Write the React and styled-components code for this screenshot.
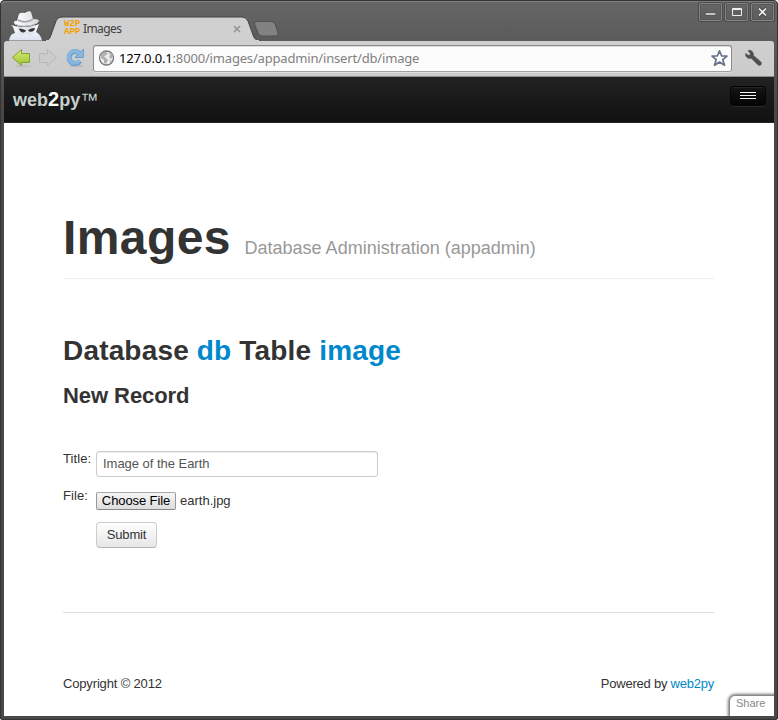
import React from "react";
import styled, { createGlobalStyle } from "styled-components";

const GlobalStyle = createGlobalStyle`
  * { box-sizing: border-box; }
  body { margin: 0; background: #fff; font: 13px/18px "Liberation Sans", Arial, sans-serif; color: #333; }
`;

const Window = styled.div`
  width: 778px;
  height: 720px;
  display: flex;
  flex-direction: column;
  overflow: hidden;
  padding: 0 4px 4px;
  border-radius: 5px 5px 3px 3px;
  background: linear-gradient(#666 0, #5b5b5b 40px, #484848 110px, #484848 100%);
  box-shadow: inset 0 0 0 1px #343434, inset 1px 3px 0 -1px #7e7e7e;
  position: relative;
`;
const TitleBar = styled.header`
  height: 41px;
  flex: none;
  display: flex;
  align-items: flex-start;
`;
const Incognito = styled.svg`
  width: 35px;
  height: 32px;
  margin: 9px 0 0 4px;
`;
const Tab = styled.div`
  width: 215px;
  height: 26px;
  margin: 15px 0 0 2px;
  padding: 5px 19px 0 18px;
  display: flex;
  align-items: flex-start;
  position: relative;
`;
const TabShape = styled.svg`
  position: absolute;
  inset: 0;
  z-index: 0;
`;
const Favicon = styled.span`
  position: relative;
  width: 17px;
  height: 16px;
  padding: 1px 0 0 1px;
  display: flex;
  flex-direction: column;
  font: bold 9px/8px "Liberation Mono", monospace;
  color: #f3a000;
  letter-spacing: 0;
  span { height: 7px; line-height: 7px; }
  span + span { margin-top: 1px; }
`;
const TabTitle = styled.span`
  position: relative;
  flex: 1;
  margin-left: 3px;
  font: 12px/17px "Noto Sans", sans-serif;
  letter-spacing: -0.6px;
  color: #404040;
`;
const TabClose = styled.svg`
  position: relative;
  width: 8px;
  height: 8px;
  margin-top: 5px;
`;
const NewTab = styled.svg`
  width: 28px;
  height: 18px;
  margin: 20px 0 0 -8px;
`;
const WindowControls = styled.div`
  display: flex;
  gap: 3px;
  margin: 3px 0 0 auto;
`;
const Control = styled.button`
  width: 23px;
  height: 18px;
  padding: 0;
  border: 1px solid #858585;
  border-radius: 2px;
  background: linear-gradient(#666, #5c5c5c);
  box-shadow: 0 0 0 1px #4b4b4b, inset 0 0 0 1px #575757;
  display: block;
  svg { display: block; }
`;
const Toolbar = styled.div`
  height: 36px;
  flex: none;
  display: flex;
  align-items: center;
  padding: 0 12px 1px 7px;
  background: linear-gradient(#d0d0d0, #cbcbcb);
  border-bottom: 1px solid #8c8c8c;
  border-radius: 3px 3px 0 0;
`;
const ToolIcon = styled.svg`
  width: 22px;
  height: 22px;
  flex: none;
  margin-right: ${(p) => p.$gap || 5}px;
`;
const Wrench = styled.svg`
  width: 17px;
  height: 18px;
  margin-left: auto;
`;
const AddressBar = styled.div`
  width: 639px;
  flex: none;
  height: 27px;
  display: flex;
  align-items: center;
  padding: 0 2px 0 4px;
  border: 1px solid #8a8a8a;
  border-bottom-color: #a0a0a0;
  border-radius: 3px;
  background: #fcfcfc;
  box-shadow: inset 0 1px #ddd, 0 1px #dedede;
`;
const Url = styled.span`
  flex: 1;
  margin-left: 3px;
  font: 13px/18px "Noto Sans", sans-serif;
  letter-spacing: -0.17px;
  color: #808080;
  b { font-weight: 400; color: #000; }
`;
const Page = styled.main`
  flex: 1;
  background: #fff;
  position: relative;
`;
const Navbar = styled.nav`
  height: 46px;
  display: flex;
  align-items: flex-start;
  justify-content: space-between;
  padding: 9px 8px 0 9px;
  background: linear-gradient(#222, #111);
  border-bottom: 1px solid #252525;
`;
const Brand = styled.a`
  font-size: 18px;
  line-height: 27px;
  font-weight: bold;
  color: #c6d0cc;
  b { color: #fff; font-size: 20px; }
  span { font-weight: 400; }
`;
const MenuButton = styled.button`
  width: 36px;
  height: 20px;
  padding: 5px 10px 0 9px;
  border: 1px solid #050505;
  border-top-color: #000;
  border-radius: 4px;
  background: linear-gradient(#151515, #040404);
  box-shadow: 0 1px #2b2b2b, inset 0 1px #242424;
  display: flex;
  flex-direction: column;
  gap: 2px;
`;
const MenuBar = styled.i`
  width: 16px;
  height: 1px;
  background: #f5f5f5;
`;
const Content = styled.div`
  width: 651px;
  margin-left: 59px;
`;
const PageHeader = styled.header`
  height: 156px;
  padding-top: 91px;
  border-bottom: 1px solid #eee;
`;
const Title = styled.h1`
  margin: 0;
  font-size: 48px;
  line-height: 48px;
  letter-spacing: 0.4px;
  white-space: nowrap;
  small { font-size: 18px; font-weight: 400; color: #999; letter-spacing: 0; }
`;
const Heading = styled.h2`
  margin: 54px 0 0;
  font-size: 28px;
  line-height: 36px;
  letter-spacing: 0.17px;
`;
const SubHeading = styled.h3`
  margin: 9px 0 0;
  font-size: 22px;
  line-height: 36px;
  letter-spacing: -0.07px;
`;
const Link = styled.a`
  color: #08c;
`;
const Form = styled.form`
  display: grid;
  grid-template-columns: 33px 1fr;
  grid-template-rows: 40px 31px 26px;
  margin-top: 37px;
`;
const Label = styled.label`
  margin-top: ${(p) => p.$top}px;
  letter-spacing: 0.1px;
`;
const TextInput = styled.input`
  width: 282px;
  height: 26px;
  padding: 3px 6px 4px;
  border: 1px solid #ccc;
  border-radius: 3px;
  box-shadow: inset 0 1px 1px rgba(0,0,0,.075);
  font: 13px/18px "Liberation Sans", Arial, sans-serif;
  letter-spacing: -0.03px;
  color: #555;
`;
const FileField = styled.div`
  display: flex;
  gap: 4px;
  height: 18px;
  margin-top: 1px;
`;
const FileButton = styled.button`
  width: 80px;
  height: 18px;
  padding: 0;
  border: 1px solid #999;
  border-color: #aaa #999 #888 #999;
  border-radius: 2px;
  background: linear-gradient(#f6f6f6, #dedede);
  font: 13px/16px "Liberation Sans", Arial, sans-serif;
  letter-spacing: -0.1px;
  color: #000;
`;
const Submit = styled.button`
  grid-column: 2;
  width: 61px;
  height: 26px;
  padding: 0;
  border: 1px solid #ccc;
  border-bottom-color: #b3b3b3;
  border-radius: 4px;
  background: linear-gradient(#fff, #e6e6e6);
  font: 13px/18px "Liberation Sans", Arial, sans-serif;
  letter-spacing: -0.2px;
  color: #333;
`;
const Footer = styled.footer`
  display: flex;
  justify-content: space-between;
  margin-top: 64px;
  padding-top: 62px;
  border-top: 1px solid #ddd;
  letter-spacing: -0.16px;
  span + span { letter-spacing: -0.23px; }
`;
const Share = styled.div`
  position: absolute;
  right: 0;
  bottom: 0;
  width: 44px;
  height: 20px;
  padding-left: 6px;
  border-radius: 5px 0 0 0;
  background: #fff;
  box-shadow: 0 0 3px 2px #777;
  clip-path: inset(-5px 0 0 -5px);
  font-size: 11px;
  line-height: 15px;
  color: #888;
`;

export default function App() {
  return (
    <Window>
      <GlobalStyle />
      <TitleBar>
        <Incognito viewBox="0 0 35 32">
          <defs>
            <linearGradient id="coat" x2="0" y2="1"><stop stopColor="#fff" /><stop offset="1" stopColor="#dce2f0" /></linearGradient>
            <linearGradient id="hat" x2="1" y2="0"><stop stopColor="#fff" /><stop offset="1" stopColor="#d9dade" /></linearGradient>
          </defs>
          <path d="M1 31.500C2 26 4 25 7 24L5 18 3 16 10 18H24L31 15 28 23C31 25 33 27 34 31.500z" fill="url(#coat)" />
          <path d="M9 17Q17 20 27 16L26 23l-4 4-4-2-5 2-3-4z" fill="#e2e5ed" />
          <path d="M9 12 11 5Q13 3 17 4 21 1 23 3L25 10Q31 10 31 12C29 17 8 19 6 14Q6 11 9 12z" fill="url(#hat)" />
          <path d="M10 10Q17 14 25 9.500L25.500 11Q17 16 10 12z" fill="#a5a7ad" />
          <path d="M7 15Q17 20 29 14" fill="none" stroke="#c8cad0" />
          <path d="M11 19.500q4 0 6 1.500h3q3-2 7-2c0 4-6 5-7 2h-2c-1 4-6 3-7-1.500z" fill="#333" />
        </Incognito>
        <Tab>
          <TabShape width="215" height="26" viewBox="0 0 215 26">
            <path d="M0 26C4 25 5 23 6 20L11 6Q12 2 17 2H197Q201 2 203 6L208 20Q210 26 215 26z" fill="#d0d0d0" stroke="#454545" strokeWidth="1" />
            <path d="M1 25.500H214" stroke="#d0d0d0" />
          </TabShape>
          <Favicon><span>W2P</span><span>APP</span></Favicon>
          <TabTitle>Images</TabTitle>
          <TabClose viewBox="0 0 8 8"><path d="M1 1l6 6M7 1L1 7" stroke="#929292" strokeWidth="1.500" /></TabClose>
        </Tab>
        <NewTab viewBox="0 0 28 18"><path d="M4 1.500H19Q22 1.500 23 4L26 13Q27 16 24 16H10Q7 16 6 13L2.500 4Q2 1.500 4 1.500z" fill="#828282" stroke="#505050" /></NewTab>
        <WindowControls>
          <Control aria-label="Minimize"><svg width="21" height="16"><rect x="5.500" y="9" width="10" height="2" fill="#f0f0f0" stroke="#444" strokeWidth=".5" /></svg></Control>
          <Control aria-label="Maximize"><svg width="21" height="16"><path d="M6.500 4.500h9v7h-9zM6 5.500h10" fill="none" stroke="#eee" /></svg></Control>
          <Control aria-label="Close"><svg width="21" height="16"><path d="M7 4l7 8M14 4l-7 8" stroke="#424242" strokeWidth="3" /><path d="M7 4.500l7 7M14 4.500l-7 7" stroke="#f2f2f2" strokeWidth="1.700" /></svg></Control>
        </WindowControls>
      </TitleBar>
      <Toolbar>
        <ToolIcon viewBox="0 0 22 22">
          <defs><linearGradient id="back" x2="0" y2="1"><stop stopColor="#d9ed83" /><stop offset="1" stopColor="#9bc329" /></linearGradient></defs>
          <ellipse cx="12" cy="19" rx="8" ry="1.500" fill="#aaa" opacity=".35" />
          <path d="M1.500 10.500 10.500 2.500V6.500H18.500V15.500H10.500V18.500z" fill="url(#back)" stroke="#80a32d" strokeLinejoin="round" />
        </ToolIcon>
        <ToolIcon viewBox="0 0 22 22"><path d="M18.500 10.500 9.500 2.500V6.500H1.500V15.500H9.500V18.500z" fill="#cbcbc9" stroke="#b7b7b5" strokeLinejoin="round" /></ToolIcon>
        <ToolIcon viewBox="0 0 22 22" $gap={6}>
          <ellipse cx="11" cy="19" rx="7" ry="1.500" fill="#999" opacity=".3" />
          <path d="M14.500 6.500A6 6 0 1 0 15 14" fill="none" stroke="#6b9fcf" strokeWidth="5" />
          <path d="M18.500 2V10.500H10z" fill="#8ab7df" stroke="#6b9fcf" strokeLinejoin="round" />
          <path d="M14.500 6.500A6 6 0 1 0 14.500 13.600" fill="none" stroke="#8ab7df" strokeWidth="3.400" />
        </ToolIcon>
        <AddressBar>
          <svg width="18" height="18" viewBox="0 0 18 18">
            <circle cx="8.500" cy="9" r="7" fill="#ededed" stroke="#777" strokeWidth="1.300" />
            <path d="M3 5Q5 2 8 3L10 5 8 6 6 8 8 9 10 11 8 15 6 14 6 11 3 9zM11 3Q15 4 15 8L13 10 11 8 12 6zM12 11l2 1-2 2z" fill="#b0b0b0" />
          </svg>
          <Url><b>127.0.0.1</b>:8000/images/appadmin/insert/db/image</Url>
          <svg width="19" height="19" viewBox="0 0 19 19"><path d="M9.500 1.800 11.700 7H17L12.800 10.700 14.500 16.300 9.500 13 4.500 16.300 6.200 10.700 2 7H7.300z" fill="#fff" stroke="#67738b" strokeWidth="1.700" strokeLinejoin="round" /></svg>
        </AddressBar>
        <Wrench viewBox="0 0 17 18">
          <path d="M3 1.500C6 .500 9 3 8.500 6.500L15.500 12.500C18 15 15 18 12.500 15.500L6.500 9.500C3 10 0 8 .500 4.500L4 6.500 5.500 5z" fill="#505050" stroke="#505050" strokeWidth=".5" />
        </Wrench>
      </Toolbar>
      <Page>
        <Navbar>
          <Brand>web<b>2</b>py<span>™</span></Brand>
          <MenuButton aria-label="Menu"><MenuBar /><MenuBar /><MenuBar /></MenuButton>
        </Navbar>
        <Content>
          <PageHeader><Title>Images <small>Database Administration (appadmin)</small></Title></PageHeader>
          <Heading>Database <Link>db</Link> Table <Link>image</Link></Heading>
          <SubHeading>New Record</SubHeading>
          <Form>
            <Label $top={-1}>Title:</Label>
            <TextInput defaultValue="Image of the Earth" />
            <Label $top={-4}>File:</Label>
            <FileField><FileButton type="button">Choose File</FileButton><span>earth.jpg</span></FileField>
            <Submit type="button">Submit</Submit>
          </Form>
          <Footer><span>Copyright © 2012</span><span>Powered by <Link>web2py</Link></span></Footer>
        </Content>
        <Share>Share</Share>
      </Page>
    </Window>
  );
}
